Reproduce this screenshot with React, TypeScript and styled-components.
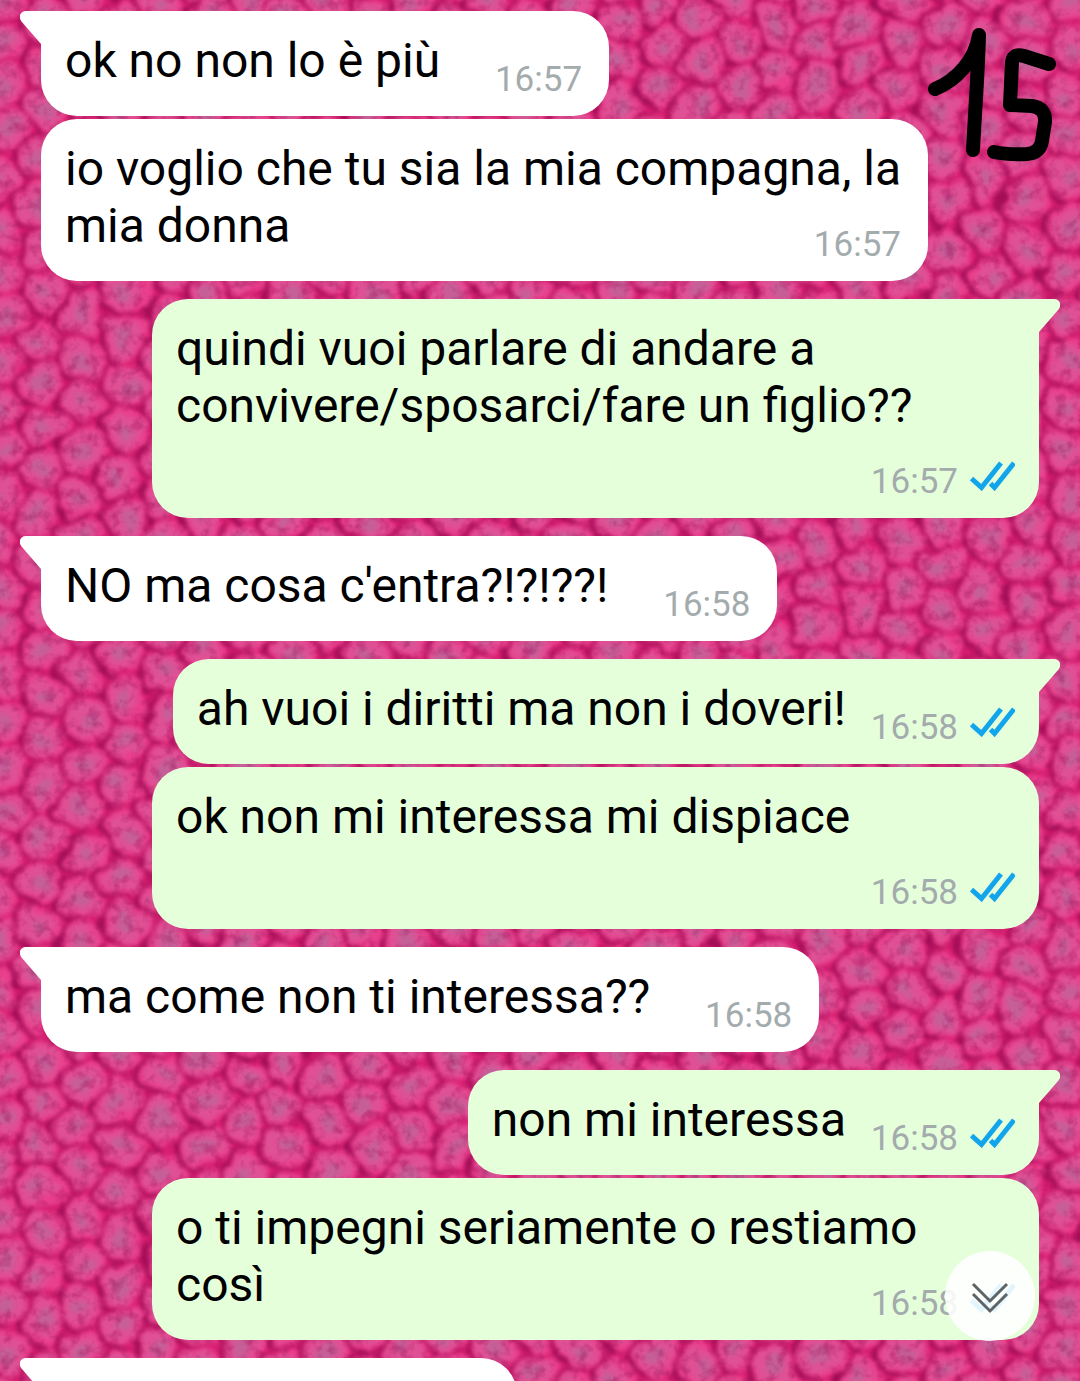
import React from "react";
import styled, { createGlobalStyle, css } from "styled-components";

const GlobalStyle = createGlobalStyle`
  *, *::before, *::after { box-sizing: border-box; }
  html, body { margin: 0; background: #d42e7b; }
  body { font-family: Roboto, "Noto Sans", sans-serif; color: #000; }
`;

const Screen = styled.main`
  position: relative;
  height: 100vh;
  overflow: hidden;
`;

const Wallpaper = styled.svg`
  position: absolute;
  inset: 0;
  width: 100%;
  height: 100%;
`;

const Thread = styled.ol`
  position: relative;
  display: flex;
  flex-direction: column;
  margin: 0;
  padding: 11px 41px 0;
  list-style: none;
`;

type Side = "in" | "out";

const Row = styled.li<{ $side: Side; $grouped?: boolean }>`
  display: flex;
  justify-content: ${(p) => (p.$side === "out" ? "flex-end" : "flex-start")};
  margin-top: ${(p) => (p.$grouped ? 3 : 18)}px;
  &:first-child {
    margin-top: 0;
  }
`;

const Bubble = styled.article<{ $side: Side; $tail: boolean }>`
  position: relative;
  display: grid;
  max-width: calc(100% - 111px);
  padding: 21px 24px 27px;
  border-radius: 36px;
  background: ${(p) => (p.$side === "out" ? "#e5ffdb" : "#fff")};
  color: ${(p) => (p.$side === "out" ? "#e5ffdb" : "#fff")};
  ${(p) =>
    p.$tail &&
    (p.$side === "out"
      ? css`
          border-top-right-radius: 0;
        `
      : css`
          border-top-left-radius: 0;
        `)}
`;

const Tail = styled.svg<{ $side: Side }>`
  position: absolute;
  top: 0;
  width: 22px;
  height: 34px;
  fill: currentColor;
  ${(p) =>
    p.$side === "out"
      ? css`
          right: -21px;
          transform: scaleX(-1);
        `
      : css`
          left: -21px;
        `}
`;

const Message = styled.p`
  grid-area: 1 / 1;
  margin: 0;
  font-size: 48px;
  line-height: 57px;
  color: #000;
`;

/* Keeps the end of the last line free for the time stamp. */
const StampSpace = styled.span<{ $side: Side }>`
  display: inline-block;
  width: ${(p) => (p.$side === "out" ? 169 : 145)}px;
  height: 1px;
`;

const Stamp = styled.footer<{ $side: Side }>`
  grid-area: 1 / 1;
  align-self: end;
  justify-self: end;
  display: flex;
  align-items: flex-start;
  gap: 12px;
  margin-bottom: -12px;
  padding-right: ${(p) => (p.$side === "out" ? 0 : 3)}px;
  font-size: 35px;
  line-height: 42px;
  color: #a3abad;
`;

const Ticks = styled.svg`
  width: 45px;
  height: 30px;
  fill: none;
  stroke: #12a5ec;
  stroke-width: 5;
`;

const Upcoming = styled.div`
  width: 428px;
  height: 57px;
`;

const Note = styled.svg`
  position: absolute;
  top: 20px;
  right: 16px;
  width: 144px;
  height: 150px;
  fill: none;
  stroke: #000;
  stroke-width: 14;
  stroke-linecap: round;
  stroke-linejoin: round;
`;

const ScrollButton = styled.button`
  position: absolute;
  right: 45px;
  bottom: 40px;
  display: grid;
  place-items: center;
  width: 90px;
  height: 90px;
  padding: 3px 0 0;
  border: 0;
  border-radius: 50%;
  background: rgba(255, 255, 255, 0.88);
  cursor: pointer;

  svg {
    width: 38px;
    height: 32px;
    fill: none;
    stroke: #5d6366;
    stroke-width: 3;
  }
`;

type Point = [number, number];

const WALL_W = 1080;
const WALL_H = 1400;

function randomizer(seed: number) {
  let s = seed;
  return () => {
    s = (s * 1664525 + 1013904223) % 4294967296;
    return s / 4294967296;
  };
}

/* Cuts a polygon to the part that is nearer to a than to b. */
function clip(poly: Point[], a: Point, b: Point): Point[] {
  const mx = (a[0] + b[0]) / 2;
  const my = (a[1] + b[1]) / 2;
  const nx = b[0] - a[0];
  const ny = b[1] - a[1];
  const side = (p: Point) => (p[0] - mx) * nx + (p[1] - my) * ny;
  const out: Point[] = [];
  poly.forEach((p, i) => {
    const q = poly[(i + 1) % poly.length];
    const dp = side(p);
    const dq = side(q);
    if (dp <= 0) out.push(p);
    if (dp < 0 !== dq < 0) {
      const t = dp / (dp - dq);
      out.push([p[0] + (q[0] - p[0]) * t, p[1] + (q[1] - p[1]) * t]);
    }
  });
  return out;
}

/* Smooth closed outline through the middles of the polygon's sides. */
function outline(poly: Point[], c: Point, scale: number) {
  const pts = poly.map(
    (p): Point => [c[0] + (p[0] - c[0]) * scale, c[1] + (p[1] - c[1]) * scale],
  );
  const mid = (i: number) => {
    const p = pts[i % pts.length];
    const q = pts[(i + 1) % pts.length];
    return `${((p[0] + q[0]) / 2).toFixed(1)} ${((p[1] + q[1]) / 2).toFixed(1)}`;
  };
  let d = `M${mid(0)}`;
  for (let i = 1; i <= pts.length; i++) {
    const p = pts[i % pts.length];
    d += `Q${p[0].toFixed(1)} ${p[1].toFixed(1)} ${mid(i)}`;
  }
  return d + "Z";
}

function makeBeads() {
  const rnd = randomizer(15);
  const seeds: Point[] = [];
  for (let col = -1; col * 41 < WALL_W + 60; col++) {
    for (let row = -1; row * 45 < WALL_H + 60; row++) {
      seeds.push([
        col * 41 + (rnd() - 0.5) * 17,
        row * 45 + (col % 2 ? 22 : 0) + (rnd() - 0.5) * 17,
      ]);
    }
  }
  let rim = "";
  let face = "";
  let core = "";
  seeds.forEach((s) => {
    let poly: Point[] = [
      [s[0] - 40, s[1] - 40],
      [s[0] + 40, s[1] - 40],
      [s[0] + 40, s[1] + 40],
      [s[0] - 40, s[1] + 40],
    ];
    seeds.forEach((o) => {
      if (o !== s && Math.abs(o[0] - s[0]) < 90 && Math.abs(o[1] - s[1]) < 90) {
        poly = clip(poly, s, o);
      }
    });
    rim += outline(poly, s, 0.94);
    face += outline(poly, s, 0.76);
    core += outline(poly, s, 0.36);
  });
  return { rim, face, core };
}

const beads = makeBeads();

function BeadWallpaper() {
  return (
    <Wallpaper
      viewBox={`0 0 ${WALL_W} ${WALL_H}`}
      preserveAspectRatio="xMinYMin slice"
      aria-hidden="true"
    >
      <defs>
        <filter id="rough" x="0" y="0" width="100%" height="100%" colorInterpolationFilters="sRGB">
          <feTurbulence type="fractalNoise" baseFrequency="0.035" numOctaves="2" seed="4" result="n" />
          <feDisplacementMap in="SourceGraphic" in2="n" scale="22" xChannelSelector="R" yChannelSelector="G" />
          <feGaussianBlur stdDeviation="2" />
        </filter>
        <filter id="grain" x="0" y="0" width="100%" height="100%" colorInterpolationFilters="sRGB">
          <feTurbulence type="fractalNoise" baseFrequency="0.09" numOctaves="3" seed="8" />
          <feColorMatrix
            values="0 0 0 0 0.6
                    0 0 0 0 0.03
                    0 0 0 0 0.33
                    2.6 0 0 0 -1.15"
          />
        </filter>
      </defs>
      <g filter="url(#rough)">
        <rect x="-20" y="-20" width={WALL_W + 40} height={WALL_H + 40} fill="#d81e70" />
        <path d={beads.rim} fill="#a50e58" stroke="#a50e58" strokeWidth="2" transform="translate(-3 1)" />
        <path d={beads.rim} fill="#ea3f8c" transform="translate(1 0)" />
        <path d={beads.face} fill="#df5094" />
        <path d={beads.core} fill="#c65f98" />
      </g>
      <rect width={WALL_W} height={WALL_H} filter="url(#grain)" opacity="0.4" />
    </Wallpaper>
  );
}

interface Entry {
  side: Side;
  tail: boolean;
  text?: string;
  time?: string;
}

const entries: Entry[] = [
  { side: "in", tail: true, text: "ok no non lo è più", time: "16:57" },
  { side: "in", tail: false, text: "io voglio che tu sia la mia compagna, la mia donna", time: "16:57" },
  { side: "out", tail: true, text: "quindi vuoi parlare di andare a convivere/sposarci/fare un figlio??", time: "16:57" },
  { side: "in", tail: true, text: "NO ma cosa c'entra?!?!??!", time: "16:58" },
  { side: "out", tail: true, text: "ah vuoi i diritti ma non i doveri!", time: "16:58" },
  { side: "out", tail: false, text: "ok non mi interessa mi dispiace", time: "16:58" },
  { side: "in", tail: true, text: "ma come non ti interessa??", time: "16:58" },
  { side: "out", tail: true, text: "non mi interessa", time: "16:58" },
  { side: "out", tail: false, text: "o ti impegni seriamente o restiamo così", time: "16:58" },
  { side: "in", tail: true },
];

function ChatEntry({ side, tail, text, time }: Entry) {
  return (
    <Row $side={side} $grouped={!tail}>
      <Bubble $side={side} $tail={tail}>
        {tail && (
          <Tail $side={side} viewBox="0 0 22 34" aria-hidden="true">
            <path d="M22 0H6C0 0-2 6 1.500 10.500L21 33H22Z" />
          </Tail>
        )}
        {text ? (
          <>
            <Message>
              {text}
              <StampSpace $side={side} />
            </Message>
            <Stamp $side={side}>
              <time>{time}</time>
              {side === "out" && (
                <Ticks viewBox="0 0 45 30" role="img" aria-label="Letto">
                  <path d="M1.500 17.500 11.500 26.500 31 2M20.500 22.500 24.500 26.500 44 2" />
                </Ticks>
              )}
            </Stamp>
          </>
        ) : (
          <Upcoming />
        )}
      </Bubble>
    </Row>
  );
}

export default function App() {
  return (
    <Screen>
      <GlobalStyle />
      <BeadWallpaper />
      <Thread>
        {entries.map((entry, i) => (
          <ChatEntry key={i} {...entry} />
        ))}
      </Thread>
      <Note viewBox="920 20 144 150" aria-hidden="true">
        <path d="M935 89C957 80 975 60 979 35C978 75 975 110 973 150" />
        <path d="M1049 64 1024 56Q1013 53 1012 62L1010 105 1032 106Q1046 108 1045 122L1042 141Q1040 153 1027 154Q1008 155 994 152" />
      </Note>
      <ScrollButton type="button" aria-label="Vai in fondo">
        <svg viewBox="0 0 38 32" aria-hidden="true">
          <path d="M2 2 19 19 36 2M2 12 19 29 36 12" />
        </svg>
      </ScrollButton>
    </Screen>
  );
}
